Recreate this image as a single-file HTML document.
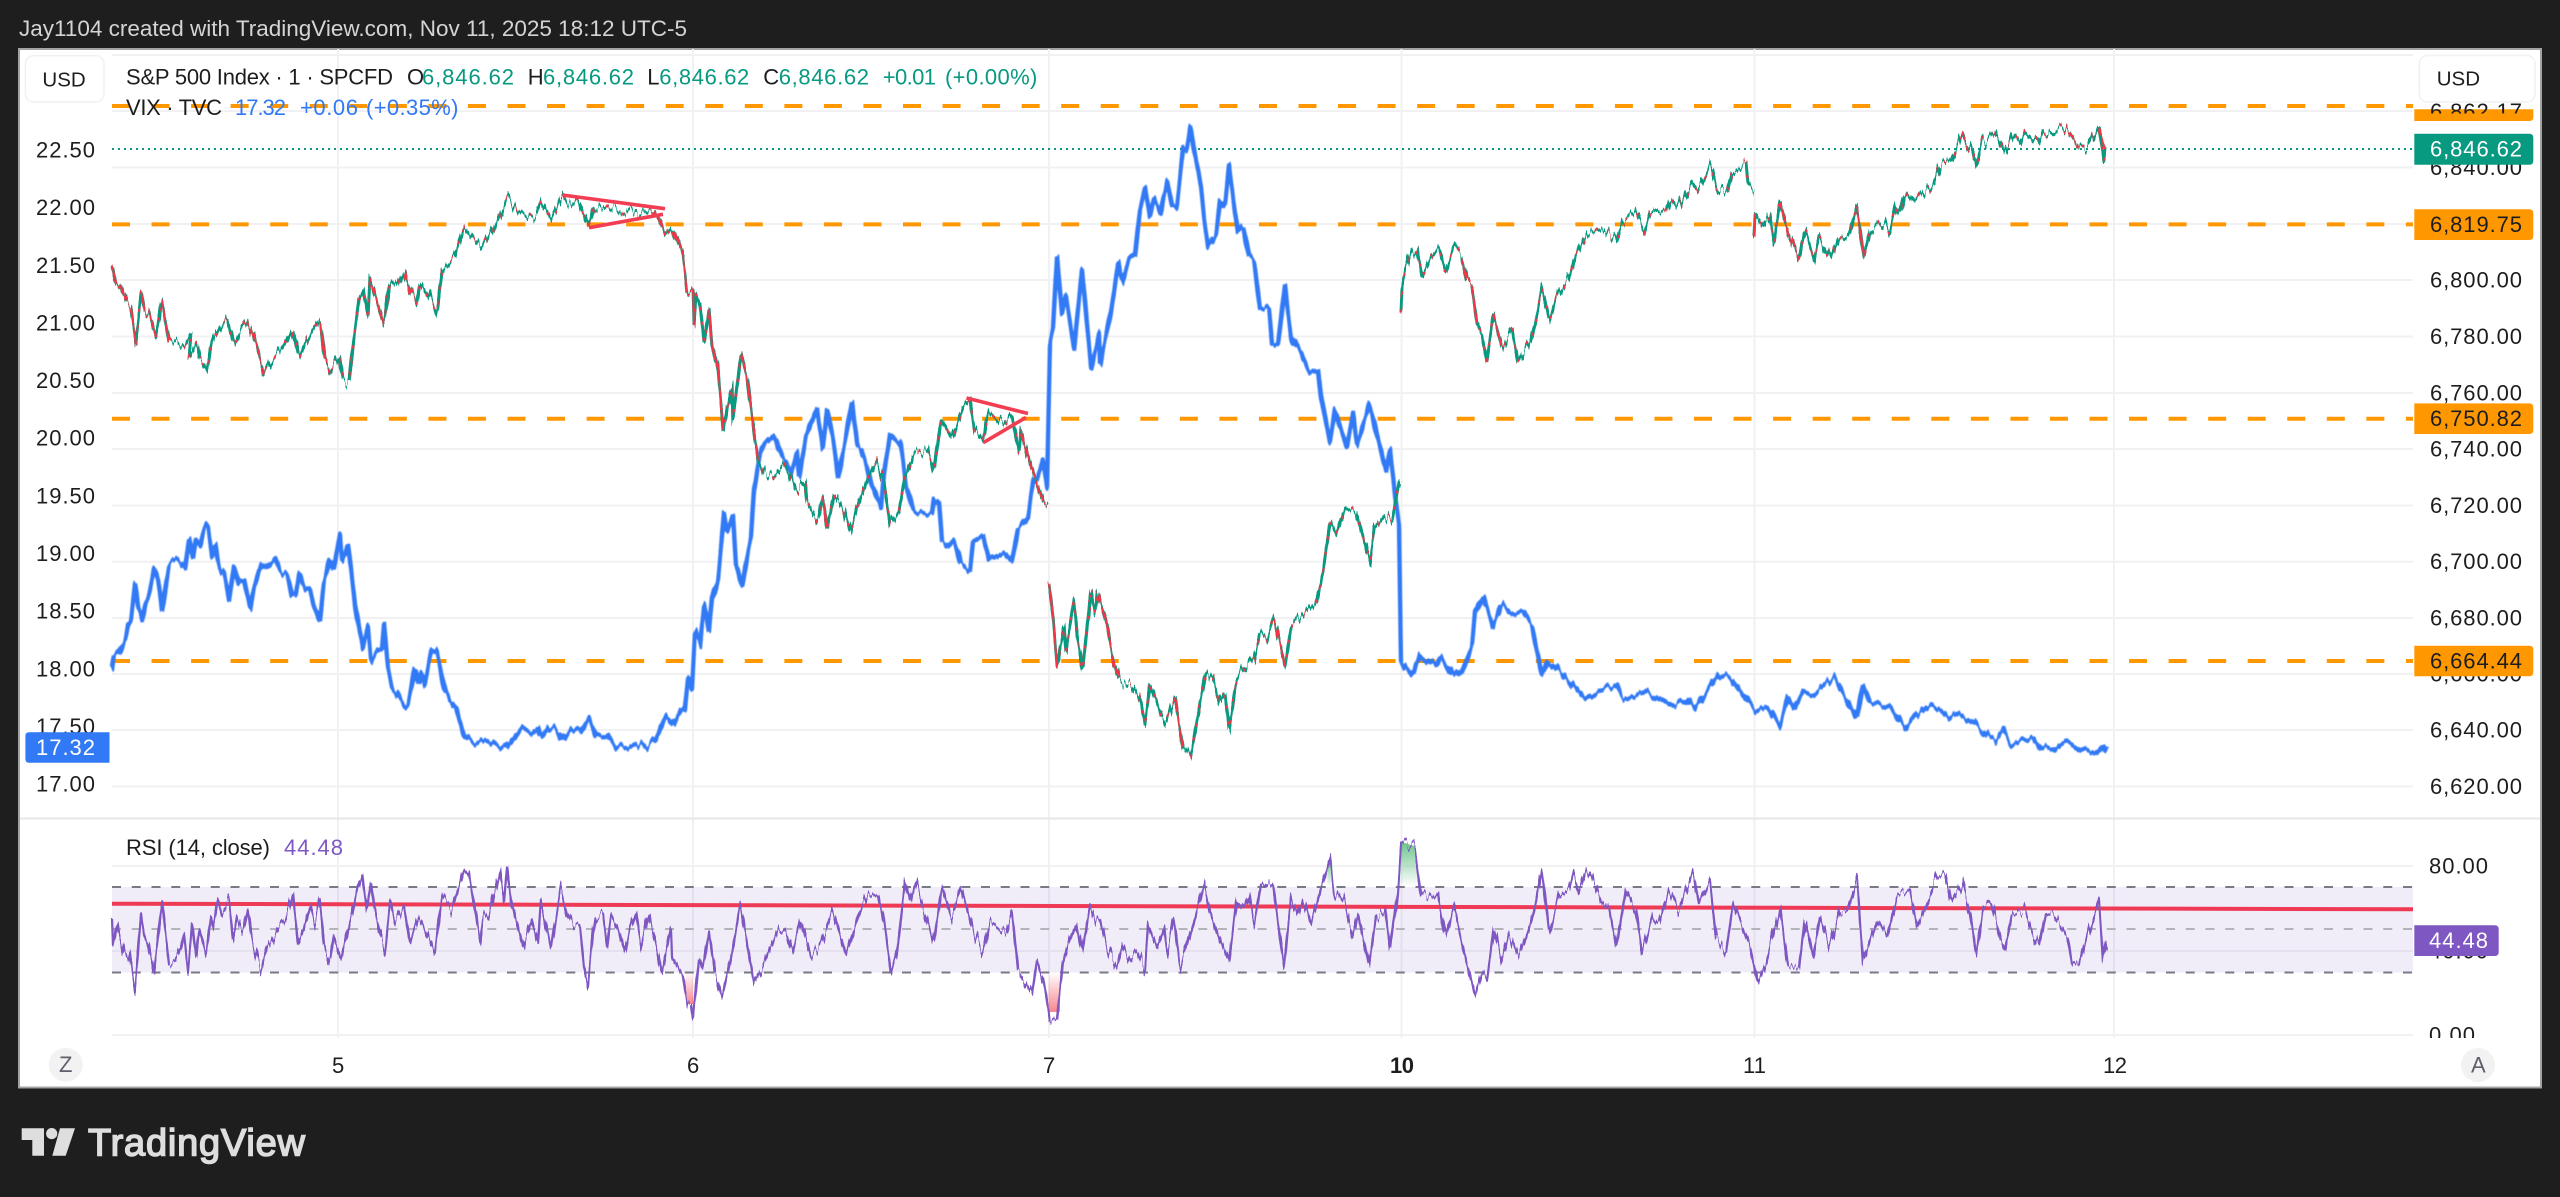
<!DOCTYPE html>
<html lang="en">
<head>
<meta charset="utf-8">
<title>S&amp;P 500 Index chart - TradingView</title>
<style>
html,body{margin:0;padding:0;background:#1e1e1e;width:2560px;height:1197px;overflow:hidden}
svg{display:block}
text{font-family:"Liberation Sans",sans-serif;font-size:22px;fill:#1d1d20}
.g{stroke:#f1f1f3;stroke-width:2;fill:none}
.o{stroke:#ff9800;stroke-width:4;stroke-dasharray:18 21.55;fill:none}
.t{fill:#089981}
.b{fill:#3179f5}
.w{fill:#fff}
.p{fill:#7e57c2}
</style>
</head>
<body>
<svg width="2560" height="1197" viewBox="0 0 2560 1197" xmlns="http://www.w3.org/2000/svg">
<defs>
<linearGradient id="gr" x1="0" y1="0" x2="0" y2="1"><stop offset="0" stop-color="#6cc38c"/><stop offset="1" stop-color="#6cc38c" stop-opacity="0"/></linearGradient>
<linearGradient id="pk" x1="0" y1="0" x2="0" y2="1"><stop offset="0" stop-color="#f23645" stop-opacity="0"/><stop offset="1" stop-color="#f23645" stop-opacity=".6"/></linearGradient>
<clipPath id="cTop"><rect x="2414" y="103" width="120" height="10.5"/></clipPath>
<clipPath id="cBot"><rect x="2414" y="1000" width="120" height="38"/></clipPath>
<filter id="jS" filterUnits="userSpaceOnUse" x="0" y="0" width="2560" height="1197" color-interpolation-filters="sRGB">
<feTurbulence type="fractalNoise" baseFrequency="0.33 0.002" numOctaves="2" seed="7" result="n"/>
<feColorMatrix in="n" type="matrix" values="0 0 0 0 .5  0 1 0 0 0  0 0 0 0 0  0 0 0 0 1" result="m"/>
<feDisplacementMap in="SourceGraphic" in2="m" scale="22" xChannelSelector="R" yChannelSelector="G" result="d"/>
<feGaussianBlur in="d" stdDeviation=".35"/>
</filter>
<filter id="jV" filterUnits="userSpaceOnUse" x="0" y="0" width="2560" height="1197" color-interpolation-filters="sRGB">
<feTurbulence type="fractalNoise" baseFrequency="0.2 0.002" numOctaves="2" seed="3" result="n"/>
<feColorMatrix in="n" type="matrix" values="0 0 0 0 .5  0 1 0 0 0  0 0 0 0 0  0 0 0 0 1" result="m"/>
<feDisplacementMap in="SourceGraphic" in2="m" scale="14" xChannelSelector="R" yChannelSelector="G" result="d"/>
<feGaussianBlur in="d" stdDeviation=".4"/>
</filter>
<filter id="jR" filterUnits="userSpaceOnUse" x="0" y="0" width="2560" height="1197" color-interpolation-filters="sRGB">
<feTurbulence type="fractalNoise" baseFrequency="0.3 0.002" numOctaves="2" seed="11" result="n"/>
<feColorMatrix in="n" type="matrix" values="0 0 0 0 .5  0 1 0 0 0  0 0 0 0 0  0 0 0 0 1" result="m"/>
<feDisplacementMap in="SourceGraphic" in2="m" scale="26" xChannelSelector="R" yChannelSelector="G" result="d"/>
<feGaussianBlur in="d" stdDeviation=".3"/>
</filter>
<path id="spx1" d="M112 269L116 288L120 285L127 304L131 307L136 340L141 293L145 312L149 314L156 338L162 301L169 340L178 343L185 345L191 336L189 359L197 347L200 360L207 370L212 340L220 326L227 318L234 342L241 328L247 320L254 338L261 362L264 373L272 360L283 350L293 330L299 357L308 338L320 321L325 360L330 371L339 357L343 381L349 383L354 336L359 298L363 292L368 319L370 280L379 307L384 324L390 280L397 285L404 271L410 292L416 302L420 280L428 292L437 312L442 270L455 257L464 230L482 247L491 233L507 198L518 212L536 217L542 203L551 217L562 197L567 205L578 200L589 227L594 208L612 207L634 213L650 208L658 217L665 235L672 227L683 257L687 290L693 292L694 326L696 292L700 302L704 340L709 305L712 343L718 369L723 431L727 409L732 385L733 421L741 354L747 378L754 433L758 460L765 474L773 477L785 464L796 490L805 482L807 503L818 521L823 497L827 529L834 495L843 508L850 531L858 505L870 473L876 462L884 482L890 523L899 512L905 477L914 453L928 451L934 471L941 419L952 438L963 408L970 401L974 430L983 440L988 412L1004 423L1012 414L1019 453L1021 430L1030 464L1044 503L1048 504"/>
<path id="spx2" d="M1049 583L1053 616L1057 664L1064 625L1066 651L1074 601L1077 633L1083 672L1091 590L1095 612L1097 592L1106 620L1113 659L1120 681L1131 685L1140 698L1145 724L1150 685L1160 711L1166 722L1175 698L1180 729L1183 746L1191 755L1198 716L1206 672L1213 679L1220 703L1225 694L1229 727L1236 681L1242 672L1254 657L1260 633L1267 638L1274 618L1285 664L1291 625L1316 603L1323 573L1330 523L1336 534L1345 508L1356 512L1365 544L1370 562L1374 529L1385 516L1392 521L1399 482L1400 480"/>
<path id="spx3" d="M1401 309L1402 285L1405 272L1411 253L1417 247L1422 274L1431 257L1439 249L1445 270L1454 247L1462 257L1467 279L1472 285L1477 321L1482 332L1487 358L1493 315L1502 347L1512 330L1518 362L1530 343L1536 319L1542 290L1549 319L1556 298L1569 279L1576 257L1587 236L1604 230L1616 240L1622 221L1635 213L1644 230L1650 213L1666 213L1671 200L1678 208L1691 183L1697 191L1711 167L1717 189L1727 193L1732 172L1746 166L1748 187L1754 191"/>
<path id="spx4" d="M1754 236L1755 213L1763 225L1770 213L1774 240L1780 201L1788 230L1799 257L1804 232L1814 259L1819 236L1831 260L1839 240L1849 236L1857 206L1864 257L1870 232L1885 221L1890 232L1896 206L1900 213L1905 191L1915 202L1923 195L1934 183L1941 163L1951 161L1962 136L1967 148L1971 142L1977 163L1982 142L1995 133L2005 153L2013 136L2020 144L2025 133L2038 144L2043 133L2064 127L2079 146L2087 148L2099 127L2104 160L2105 148"/>
</defs>

<rect width="2560" height="1197" fill="#1e1e1e"/>
<text x="19" y="36" textLength="668" style="fill:#d4d4d4;font-size:22.5px">Jay1104 created with TradingView.com, Nov 11, 2025 18:12 UTC-5</text>

<rect x="19" y="49" width="2522" height="1038.5" fill="#fff" stroke="#a3a3a3" stroke-width="2"/>

<!-- horizontal grid -->
<g class="g">
<path d="M112 55H2413M112 111H2413M112 167.5H2413M112 224H2413M112 280H2413M112 336.5H2413M112 393H2413M112 449H2413M112 505.5H2413M112 561.7H2413M112 618H2413M112 674H2413M112 730H2413M112 786.5H2413"/>
<path d="M112 866H2413M112 951H2413M112 1035H2413"/>
<path d="M338 49V1038M693 49V1038M1049 49V1038M1401.5 49V1038M1754.5 49V1038M2114 49V1038"/>
</g>
<path d="M20 818.5H2540" stroke="#e6e6e8" stroke-width="2" fill="none"/>

<!-- RSI band -->
<rect x="112" y="887" width="2301" height="85.5" fill="#7e57c2" fill-opacity=".115"/>
<path d="M112 951H2413" stroke="#e4e0ee" stroke-width="2" fill="none"/>
<path d="M112 887H2413M112 972.5H2413" stroke="#787b86" stroke-width="2" stroke-dasharray="9 10.75" fill="none"/>
<path d="M112 929H2413" stroke="#b3b3ba" stroke-width="2" stroke-dasharray="9 10.75" fill="none"/>
<path d="M1048.5 972H1060V1012H1048.5Z" fill="url(#pk)"/>
<path d="M686 972H693V1004H686Z" fill="url(#pk)"/>
<path d="M1401.5 842L1414.5 846L1420 886H1400Z" fill="url(#gr)"/>
<path d="M1328 860L1332 860L1333 887H1327Z" fill="url(#gr)"/>
<path d="M112 903.7L2413 909.3" stroke="#ee3a55" stroke-width="4" fill="none"/>

<!-- orange levels -->
<g class="o">
<path d="M112 106H2413"/><path d="M112 224.4H2413"/><path d="M112 418.7H2413"/><path d="M112 661H2413"/>
</g>
<path d="M112 149H2413" stroke="#089981" stroke-width="2" stroke-dasharray="2 4" fill="none"/>

<!-- VIX -->
<path filter="url(#jV)" fill="none" stroke="#3179f5" stroke-width="4.4" stroke-linejoin="round" d="M112 667L114 653L119 650L125 638L128 624L131 620L135 584L138 605L142 619L145 605L150 591L154 569L158 579L162 610L169 564L178 560L185 567L189 538L193 558L196 540L200 545L205 525L208 526L212 555L215 545L220 571L224 572L229 599L234 565L239 583L244 581L250 608L254 586L261 564L265 567L275 558L281 572L287 574L292 596L296 595L299 574L305 589L310 588L313 602L320 620L324 583L330 560L334 569L340 534L342 560L348 545L351 567L355 605L361 638L363 650L368 629L371 662L377 653L382 651L384 626L388 670L392 688L397 693L404 705L408 707L415 670L419 684L422 672L425 684L431 653L437 651L440 667L444 688L450 701L456 708L464 736L473 743L488 739L506 749L522 727L531 731L537 727L542 738L549 728L555 729L562 740L571 729L580 733L589 718L596 736L607 734L616 746L633 746L642 742L647 746L656 739L660 729L666 715L674 724L680 712L685 708L688 677L692 689L695 633L700 645L704 605L709 633L712 598L718 581L724 514L727 531L733 515L736 564L742 586L745 569L751 536L754 491L760 453L765 443L774 434L780 451L791 473L797 453L799 477L806 436L817 408L823 447L827 410L833 438L838 477L844 447L852 402L857 443L864 456L872 486L881 508L884 473L890 434L901 445L906 486L914 512L932 514L934 499L939 503L942 542L948 547L954 540L961 564L970 570L973 542L983 536L989 560L1004 553L1012 562L1018 529L1028 518L1033 482L1037 479L1043 460L1047 486L1050 343L1053 328L1057 258L1062 317L1066 299L1074 349L1082 269L1091 367L1099 334L1100 364L1111 312L1118 263L1122 282L1129 258L1135 254L1140 208L1145 187L1150 217L1154 200L1160 213L1167 180L1172 204L1177 206L1183 150L1187 148L1190 126L1195 156L1201 187L1204 217L1208 245L1216 234L1220 200L1225 206L1229 167L1235 213L1238 232L1243 226L1249 256L1254 260L1260 308L1269 308L1272 343L1278 345L1285 284L1291 336L1300 351L1309 371L1318 367L1321 395L1330 443L1335 410L1347 447L1353 414L1357 445L1370 404L1379 443L1386 471L1390 450L1395 495L1399 524L1401 659L1413 674L1420 655L1436 666L1441 657L1454 678L1462 670L1472 644L1475 612L1483 596L1493 625L1502 604L1510 612L1523 612L1532 625L1542 673L1548 659L1556 666L1574 687L1584 698L1599 691L1617 687L1622 698L1643 693L1668 706L1686 700L1694 710L1706 693L1719 675L1730 678L1747 700L1755 710L1768 706L1780 725L1788 698L1794 708L1803 691L1814 693L1834 678L1847 700L1857 719L1863 685L1870 702L1890 706L1905 727L1915 715L1927 705L1941 710L1949 717L1956 713L1974 723L1990 739L1995 740L2003 730L2010 742L2033 738L2041 749L2053 751L2061 745L2071 742L2081 749L2097 753L2103 746L2107 753"/>

<!-- SPX -->
<g filter="url(#jS)" fill="none" stroke-linejoin="round">
<g stroke="#089981" stroke-width="3">
<use href="#spx1"/><use href="#spx2"/><use href="#spx3"/><use href="#spx4"/>
</g>
<g stroke="#f23645" stroke-width="2.6" stroke-dasharray="3 13">
<use href="#spx1"/><use href="#spx2"/><use href="#spx3"/><use href="#spx4"/>
</g>
<path stroke="#f23645" stroke-width="1.9" d="M112 269L116 288L120 285L127 304L131 307L136 340M141 293L145 312L149 314L156 338M162 301L169 340M247 320L254 338L261 362L264 373M320 321L325 360L330 371M370 280L379 307L384 324M404 271L410 292L416 302M650 208L658 217L665 235M672 227L683 257L687 290L693 292L694 326M709 305L712 343L718 369L723 431M741 354L747 378L754 433L758 460M823 497L827 529M1021 430L1030 464L1044 503L1048 504M1049 583L1053 616L1057 664M1097 592L1106 620L1113 659L1120 681M1175 698L1180 729L1183 746M1274 618L1285 664M1462 257L1467 279L1472 285L1477 321M1493 315L1502 347M1754 236L1755 213M1780 201L1788 230L1799 257M1857 206L1864 257M1962 136L1967 148M2064 127L2079 146M2099 127L2105 148"/>
</g>

<!-- triangles -->
<path d="M562.5 195L665 208.7M589 227.7L663 214.3M966.5 398L1028 413.5M983.5 442.6L1026 417.4" stroke="#f23d52" stroke-width="3.6" fill="none"/>

<!-- RSI line -->
<path filter="url(#jR)" fill="none" stroke="#7e57c2" stroke-width="2.3" stroke-linejoin="round" d="M112 918L113 945L117 924L120 938L125 958L129 952L135 988L141 913L144 933L148 943L154 972L162 902L169 963L175 962L181 948L184 933L188 970L192 924L196 957L199 930L206 955L211 917L213 927L218 898L222 913L229 902L233 940L237 918L243 933L248 910L252 940L257 957L261 970L267 948L272 940L278 927L286 917L293 893L298 943L304 927L310 905L315 923L320 902L324 945L330 963L334 938L341 958L347 933L353 907L357 887L362 873L367 910L371 885L374 907L379 930L385 950L390 900L395 922L404 905L410 943L419 917L424 927L435 953L440 913L442 897L451 910L460 883L464 868L469 873L474 903L480 940L483 913L489 920L493 900L500 872L504 900L507 865L511 900L516 920L523 947L531 920L538 945L541 902L551 948L561 888L567 913L574 927L580 927L584 967L588 985L593 933L596 915L603 918L607 947L611 913L618 927L625 953L630 930L636 913L641 945L648 913L656 943L662 973L671 930L672 957L683 977L687 1003L691 1003L693 1018L699 957L703 970L709 932L715 973L722 997L731 957L740 905L747 943L754 983L763 967L779 927L786 933L792 953L801 920L811 957L821 943L833 910L846 955L859 913L868 893L878 897L884 923L891 973L897 953L905 882L910 900L915 882L923 907L934 942L942 887L951 917L961 887L974 933L983 953L990 920L1006 933L1012 912L1018 970L1032 995L1037 960L1044 983L1050 1020L1057 1018L1063 963L1069 940L1076 923L1082 953L1090 907L1096 923L1100 920L1107 947L1117 968L1123 945L1130 960L1137 950L1145 970L1148 923L1157 947L1164 927L1167 952L1174 920L1180 967L1187 945L1195 917L1204 882L1210 910L1221 943L1229 962L1237 897L1244 907L1249 895L1254 923L1261 883L1267 888L1273 883L1284 967L1291 900L1298 917L1304 900L1311 923L1321 887L1330 858L1334 890L1344 903L1353 937L1358 913L1369 965L1376 918L1385 910L1390 950L1398 890L1401 842L1415 847L1421 893L1432 900L1438 895L1445 937L1453 907L1462 943L1468 967L1475 995L1482 973L1487 980L1494 927L1502 960L1509 933L1519 957L1529 930L1535 907L1542 868L1549 933L1559 897L1569 890L1574 872L1579 890L1586 866L1592 877L1601 902L1609 910L1617 947L1626 890L1636 910L1642 953L1653 917L1659 923L1669 890L1679 910L1693 871L1699 903L1710 880L1716 937L1726 953L1733 905L1742 927L1750 947L1758 983L1766 963L1780 907L1788 967L1799 968L1805 918L1813 957L1820 917L1830 947L1840 910L1847 910L1857 878L1863 962L1877 920L1887 937L1897 895L1910 893L1917 927L1937 878L1945 875L1951 903L1962 882L1971 920L1976 955L1983 907L1991 900L2001 940L2005 949L2012 913L2024 910L2034 937L2039 947L2046 912L2054 913L2068 937L2072 963L2079 965L2088 933L2099 899L2103 960L2107 941"/>

<!-- left axis -->
<g>
<text x="36" y="157.5" textLength="59">22.50</text>
<text x="36" y="215" textLength="59">22.00</text>
<text x="36" y="272.8" textLength="59">21.50</text>
<text x="36" y="330.4" textLength="59">21.00</text>
<text x="36" y="388" textLength="59">20.50</text>
<text x="36" y="445.7" textLength="59">20.00</text>
<text x="36" y="503.3" textLength="59">19.50</text>
<text x="36" y="561" textLength="59">19.00</text>
<text x="36" y="618.6" textLength="59">18.50</text>
<text x="36" y="676.3" textLength="59">18.00</text>
<text x="36" y="733.9" textLength="59">17.50</text>
<text x="36" y="791.5" textLength="59">17.00</text>
</g>
<path d="M29 732.3H109.5V762.7H29Q25.4 762.7 25.4 759V736Q25.4 732.3 29 732.3Z" class="b"/>
<text x="36" y="755" textLength="59" class="w">17.32</text>

<!-- right axis -->
<g>
<text x="2430" y="175" textLength="92">6,840.00</text>
<text x="2430" y="287.5" textLength="92">6,800.00</text>
<text x="2430" y="344" textLength="92">6,780.00</text>
<text x="2430" y="400.5" textLength="92">6,760.00</text>
<text x="2430" y="456.5" textLength="92">6,740.00</text>
<text x="2430" y="513" textLength="92">6,720.00</text>
<text x="2430" y="569.2" textLength="92">6,700.00</text>
<text x="2430" y="625.5" textLength="92">6,680.00</text>
<text x="2430" y="681.5" textLength="92">6,660.00</text>
<text x="2430" y="737.5" textLength="92">6,640.00</text>
<text x="2430" y="794" textLength="92">6,620.00</text>
<text x="2429" y="873.5" textLength="59">80.00</text>
<text x="2429" y="958.5" textLength="59">40.00</text>
<text x="2429" y="1042.5" textLength="46" clip-path="url(#cBot)">0.00</text>
</g>
<path d="M2414.3 109.3H2533.3V117Q2533.3 121 2529.3 121H2414.3Z" fill="#ff9800"/>
<text x="2430" y="119" textLength="92" clip-path="url(#cTop)">6,862.17</text>
<path d="M2414.3 133.7H2529.3Q2533.3 133.7 2533.3 137.7V160.7Q2533.3 164.7 2529.3 164.7H2414.3Z" fill="#089981"/>
<text x="2430" y="156.5" textLength="92" class="w">6,846.62</text>
<path d="M2414.3 209.3H2529.3Q2533.3 209.3 2533.3 213.3V236Q2533.3 240 2529.3 240H2414.3Z" fill="#ff9800"/>
<text x="2430" y="232" textLength="92">6,819.75</text>
<path d="M2414.3 403.4H2529.3Q2533.3 403.4 2533.3 407.4V430Q2533.3 434 2529.3 434H2414.3Z" fill="#ff9800"/>
<text x="2430" y="426.2" textLength="92">6,750.82</text>
<path d="M2414.3 645.7H2529.3Q2533.3 645.7 2533.3 649.7V672.3Q2533.3 676.3 2529.3 676.3H2414.3Z" fill="#ff9800"/>
<text x="2430" y="668.5" textLength="92">6,664.44</text>
<path d="M2414.3 925.3H2494.7Q2498.7 925.3 2498.7 929.3V952Q2498.7 956 2494.7 956H2414.3Z" class="p"/>
<text x="2429" y="948.2" textLength="59" class="w">44.48</text>

<!-- USD boxes -->
<rect x="25.4" y="55.7" width="78.6" height="46.3" rx="8" fill="#fff" stroke="#f1f1f3" stroke-width="1.5"/>
<text x="42.4" y="86.5" textLength="43.3" style="font-size:20.5px">USD</text>
<rect x="2419.3" y="55.5" width="115.7" height="46.5" rx="8" fill="#fff" stroke="#f1f1f3" stroke-width="1.5"/>
<text x="2436.7" y="85.5" textLength="43.3" style="font-size:20.5px">USD</text>

<!-- legend -->
<text x="126" y="84.5" textLength="267">S&amp;P 500 Index · 1 · SPCFD</text>
<text x="407" y="84.5" textLength="15">O</text>
<text x="422" y="84.5" textLength="92" class="t">6,846.62</text>
<text x="527.7" y="84.5" textLength="14.3">H</text>
<text x="543" y="84.5" textLength="91" class="t">6,846.62</text>
<text x="647.3" y="84.5" textLength="11">L</text>
<text x="659.3" y="84.5" textLength="90" class="t">6,846.62</text>
<text x="763.3" y="84.5" textLength="14.5">C</text>
<text x="778.7" y="84.5" textLength="90.3" class="t">6,846.62</text>
<text x="882.7" y="84.5" textLength="53.3" class="t">+0.01</text>
<text x="945" y="84.5" textLength="92.3" class="t">(+0.00%)</text>

<text x="126" y="115" textLength="96">VIX · TVC</text>
<text x="235" y="115" textLength="51" class="b">17.32</text>
<text x="300" y="115" textLength="58" class="b">+0.06</text>
<text x="366" y="115" textLength="92.5" class="b">(+0.35%)</text>

<text x="126" y="855" textLength="144">RSI (14, close)</text>
<text x="284" y="855" textLength="59" class="p">44.48</text>

<!-- time axis -->
<text x="332" y="1073" textLength="12">5</text>
<text x="687" y="1073" textLength="12">6</text>
<text x="1043" y="1073" textLength="12">7</text>
<text x="1390" y="1073" textLength="24" style="font-weight:bold">10</text>
<text x="1743" y="1073" textLength="23">11</text>
<text x="2103" y="1073" textLength="24">12</text>

<circle cx="65.7" cy="1064.7" r="17" fill="#f2f2f3"/>
<text x="59" y="1072" textLength="13" style="fill:#5d606b">Z</text>
<circle cx="2478" cy="1065" r="17" fill="#f2f2f3"/>
<text x="2471" y="1072.5" textLength="14" style="fill:#5d606b">A</text>

<!-- logo -->
<g fill="#dedede">
<path d="M21.7 1128.3H44V1155.7H32.3V1140H21.7Z"/>
<circle cx="51.7" cy="1133.6" r="5.6"/>
<path d="M60 1128.3H75L65.7 1155.7H52.3Z"/>
</g>
<text x="88" y="1155.5" textLength="217" style="font-size:38px;fill:#dedede;stroke:#dedede;stroke-width:1.5">TradingView</text>
</svg>
</body>
</html>
